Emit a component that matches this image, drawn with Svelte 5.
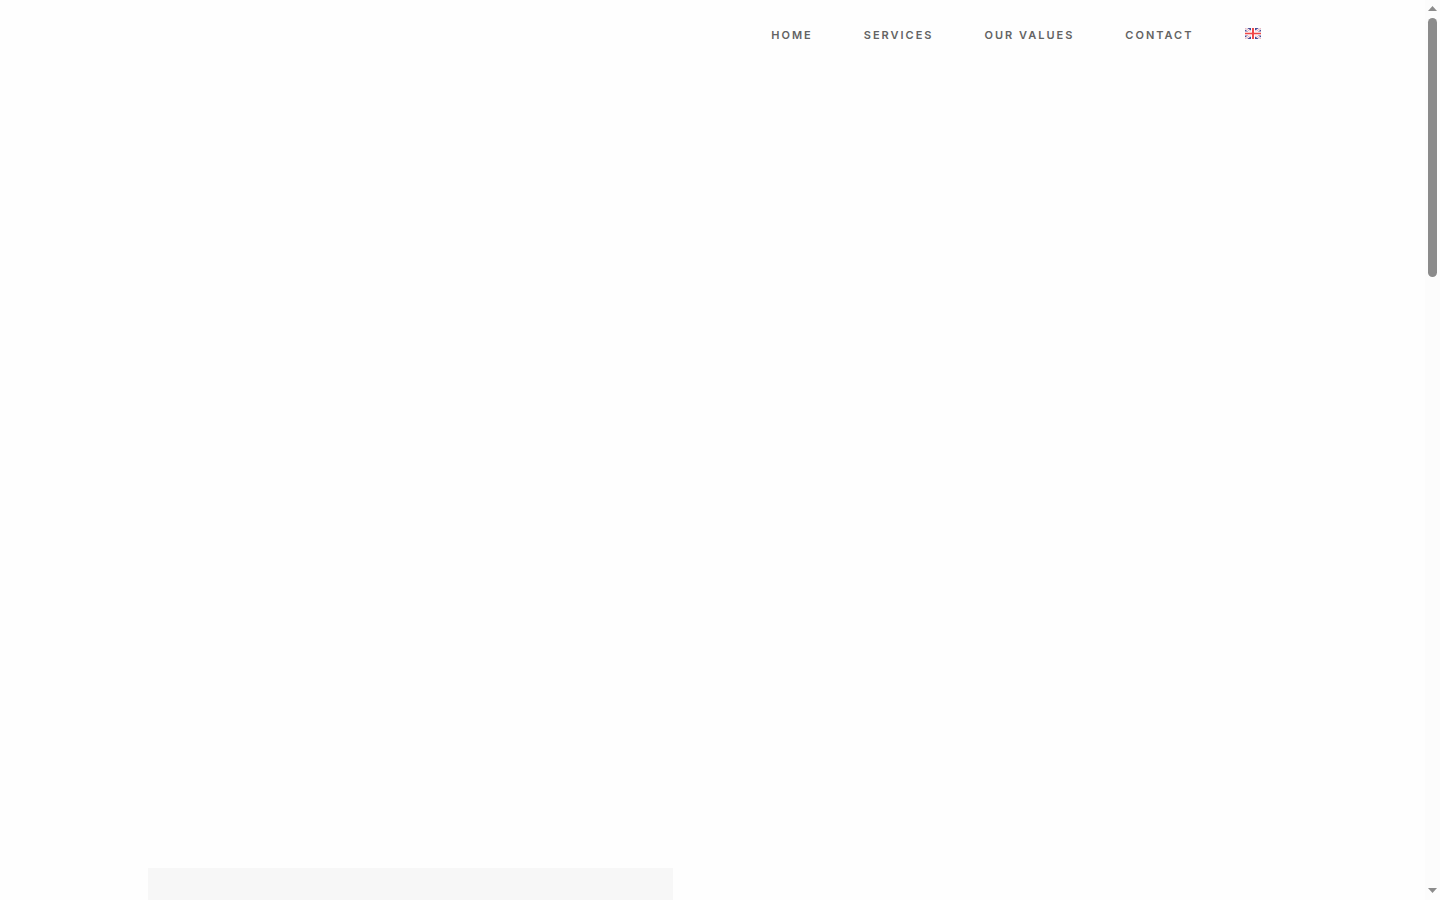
<script lang="ts">
  interface NavLink {
    label: string;
    href: string;
  }

  const links: NavLink[] = [
    { label: "Home", href: "#home" },
    { label: "Services", href: "#services" },
    { label: "Our Values", href: "#values" },
    { label: "Contact", href: "#contact" },
  ];
</script>

<div class="window">
  <div class="page">
    <header>
      <nav class="container" aria-label="Main">
        {#each links as link (link.href)}
          <a href={link.href}>{link.label}</a>
        {/each}
        <a class="language" href="#en" aria-label="English">
          <svg viewBox="0 0 16 11" width="16" height="11" aria-hidden="true">
            <rect width="16" height="11" fill="#4a4a94" />
            <path d="M0 0 16 11M16 0 0 11" stroke="#fff" stroke-width="2.4" />
            <path d="M0 0 16 11M16 0 0 11" stroke="#e08a9a" stroke-width="0.7" />
            <path d="M8 0V11M0 5.5H16" stroke="#fff" stroke-width="4" />
            <path d="M8 0V11" stroke="#f04848" stroke-width="2" />
            <path d="M0 5.5H16" stroke="#f04848" stroke-width="1.6" />
          </svg>
        </a>
      </nav>
    </header>
    <main>
      <section class="hero" id="home"></section>
      <section class="container" id="services">
        <div class="panel"></div>
      </section>
    </main>
  </div>

  <div class="scrollbar" aria-hidden="true">
    <svg viewBox="0 0 9 5" width="9" height="5"><path d="M0 5 4.5 0 9 5Z" /></svg>
    <div class="track">
      <div class="thumb"></div>
    </div>
    <svg viewBox="0 0 9 5" width="9" height="5"><path d="M0 0 4.5 5 9 0Z" /></svg>
  </div>
</div>

<style>
  :global(body) {
    margin: 0;
    background: #fefefe;
  }

  .window {
    display: flex;
    height: 100vh;
    overflow: hidden;
    font-family: Inter, "Liberation Sans", sans-serif;
  }

  .page {
    display: flex;
    flex: 1;
    flex-direction: column;
    min-width: 0;
  }

  .container {
    box-sizing: border-box;
    width: 100%;
    max-width: 1130px;
    margin: 0 auto;
  }

  nav {
    display: flex;
    align-items: center;
    justify-content: flex-end;
    gap: 51px;
    height: 70px;
    padding-right: 17px;
  }

  nav a {
    color: #636363;
    font-size: 11px;
    font-weight: 600;
    letter-spacing: 2px;
    line-height: 20px;
    text-decoration: none;
    text-transform: uppercase;
  }

  .language {
    display: flex;
    height: 14px;
  }

  main {
    display: flex;
    flex: 1;
    flex-direction: column;
  }

  .hero {
    flex: 1;
  }

  .panel {
    width: 525px;
    max-width: 100%;
    height: 32px;
    background: #f7f7f7;
  }

  .scrollbar {
    box-sizing: border-box;
    display: flex;
    flex-direction: column;
    align-items: center;
    width: 15px;
    padding: 6px 0 7px;
    background: #fcfcfc;
  }

  .scrollbar path {
    fill: #8b8b8b;
  }

  .track {
    flex: 1;
    padding: 7px 0;
  }

  .thumb {
    width: 9px;
    height: 30%;
    border-radius: 5px;
    background: #8b8b8b;
  }
</style>
